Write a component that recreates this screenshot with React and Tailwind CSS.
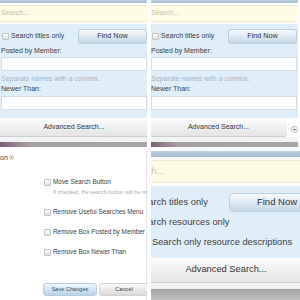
const Check = ({ big }) => (
  <span
    className={
      big
        ? 'h-[9px] w-[9px] shrink-0 rounded-[1px] border border-[#c3c3c3] bg-gradient-to-b from-white to-[#e2e2e2]'
        : 'h-[7px] w-[7px] shrink-0 rounded-[1px] border border-[#c3c3c3] bg-gradient-to-b from-white to-[#e2e2e2]'
    }
  />
);

function CircleDown({ className }) {
  return (
    <svg className={className} viewBox="0 0 9 9">
      <circle cx="4.5" cy="4.5" r="4" fill="#f3f3f3" stroke="#999" strokeWidth="0.8" />
      <path d="M2.7 3.7 L4.5 5.7 L6.3 3.7 Z" fill="#555" />
    </svg>
  );
}

function SearchForm({ toggle }) {
  return (
    <div className="flex w-[148px] flex-col text-[7px] text-[#3d3d3d]">
      <div className="h-[3px] shrink-0 bg-gradient-to-b from-[#bccfdd] to-[#a6bdd0]" />
      <div className="h-[2px] shrink-0" />
      <div className="flex h-[17px] shrink-0 items-center border-y border-[#eee9c8] bg-[#fdfbe4] pl-px text-[#c6c3a4]">
        Search...
      </div>
      <div className="h-[2px] shrink-0" />
      <div className="flex h-[94px] shrink-0 flex-col bg-[#e0eef9] px-px pt-[5px]">
        <div className="flex h-[15px] items-center justify-between">
          <label className="flex items-center gap-[2px] pl-px">
            <Check />
            Search titles only
          </label>
          <button className="h-[15px] w-[69px] rounded-[3px] border border-[#bccddb] bg-gradient-to-b from-[#f7fafc] to-[#c5d8e6] text-[7.2px] text-[#333]">
            Find Now
          </button>
        </div>
        <div className="mt-[2px] h-[10px] leading-[10px]">Posted by Member:</div>
        <div className="mt-px h-[14px] border border-[#d3dee8] bg-white" />
        <div className="mt-[3px] h-[10px] leading-[10px] text-[#a9b4bf]">Separate names with a comma.</div>
        <div className="h-[10px] leading-[10px]">Newer Than:</div>
        <div className="mt-[2px] h-[14px] border border-[#d3dee8] bg-white" />
      </div>
      {toggle ? (
        <div className="flex h-[19px] shrink-0 items-center">
          <button className="h-full w-[137px] rounded-[3px] border-b border-[#cfcfcf] bg-gradient-to-b from-[#fdfdfd] to-[#e4e4e4] text-[#333]">
            Advanced Search...
          </button>
          <CircleDown className="ml-[4px] mt-[3px] h-[7px] w-[7px]" />
        </div>
      ) : (
        <button className="h-[19px] shrink-0 border-b border-[#cfcfcf] bg-gradient-to-b from-[#fdfdfd] to-[#e4e4e4] text-[#333]">
          Advanced Search...
        </button>
      )}
      <div className="h-[5px] shrink-0 bg-[#f1f2f3]" />
      <div className="h-[6px] shrink-0 bg-[linear-gradient(90deg,#7a5f72_0px,#9a8a92_18px,#a3a3a3_30px,#a8a8a8_100%)]" />
    </div>
  );
}

function Option({ label, className }) {
  return (
    <label className={`flex h-[10px] items-center gap-[2px] whitespace-nowrap leading-[10px] ${className}`}>
      <Check />
      {label}
    </label>
  );
}

function OptionsPanel() {
  return (
    <div className="flex h-full flex-col border-r border-[#e4e4e4] bg-white text-[6.4px] text-[#3d3d3d]">
      <div className="flex h-[12px] items-center gap-[1px] text-[7px] leading-none">
        on
        <CircleDown className="h-[5px] w-[5px]" />
      </div>
      <div className="flex flex-col pl-[44px] pt-[14px]">
        <Option label="Move Search Button" />
        <div className="ml-[9px] mt-px h-[8px] whitespace-nowrap text-[5.5px] leading-[8px] text-[#adadad]">
          If checked, the search button will be moved to the right
        </div>
        <Option label="Remove Useful Searches Menu" className="mt-[11px]" />
        <Option label="Remove Box Posted by Member" className="mt-[10px]" />
        <Option label="Remove Box Newer Than" className="mt-[10px]" />
      </div>
      <div className="mt-[26px] flex gap-[2px] pl-[43px]">
        <button className="h-[13px] w-[54px] shrink-0 rounded-[3px] border border-[#b6cbdc] bg-gradient-to-b from-[#eef5fb] to-[#b9d2e5] text-[5.6px] text-[#2f4e6b]">
          Save Changes
        </button>
        <button className="h-[13px] w-[50px] shrink-0 rounded-[3px] border border-[#d2d2d2] bg-gradient-to-b from-[#fafafa] to-[#dadada] text-[5.8px] text-[#444]">
          Cancel
        </button>
      </div>
    </div>
  );
}

function ResourceSearch() {
  return (
    <div className="-ml-[26px] flex w-[202px] flex-col text-[9.3px] text-[#3d3d3d]">
      <div className="h-[6px] shrink-0 bg-gradient-to-b from-[#c0d1df] to-[#a4bcd0]" />
      <div className="h-[3px] shrink-0" />
      <div className="flex h-[23px] shrink-0 items-center border-y border-[#eee9c8] bg-[#fdfbe4] pl-[2px] text-[#c6c3a4]">
        Search...
      </div>
      <div className="h-[3px] shrink-0" />
      <div className="flex h-[72px] shrink-0 flex-col bg-[#e0eef9] pt-[7px] pr-[2px]">
        <div className="flex h-[19px] items-center justify-between">
          <label className="flex items-center gap-[2px] pl-px">
            <Check big />
            Search titles only
          </label>
          <button className="h-[19px] w-[96px] rounded-[4px] border border-[#bccddb] bg-gradient-to-b from-[#f7fafc] to-[#c5d8e6] text-[9.5px] text-[#333]">
            Find Now
          </button>
        </div>
        <label className="mt-[3px] flex h-[14px] items-center gap-[2px] pl-px leading-[14px]">
          <Check big />
          Search resources only
        </label>
        <label className="mt-[6px] flex h-[14px] items-center gap-[3px] pl-[15px] leading-[14px]">
          <Check big />
          Search only resource descriptions
        </label>
      </div>
      <button className="h-[25px] shrink-0 border-b border-[#cfcfcf] bg-gradient-to-b from-[#fdfdfd] to-[#e4e4e4] text-[#333]">
        Advanced Search...
      </button>
      <div className="h-[6px] shrink-0 bg-[#f1f2f3]" />
      <div className="h-[11px] shrink-0 bg-gradient-to-b from-[#a0a0a0] to-[#c2c2c2]" />
    </div>
  );
}

export default function App() {
  return (
    <div className="grid h-[300px] w-[300px] grid-cols-[147px_149px] grid-rows-[147px_149px] gap-[4px] overflow-hidden bg-white font-['Liberation_Sans',Arial,sans-serif]">
      <div className="overflow-hidden">
        <SearchForm />
      </div>
      <div className="overflow-hidden">
        <div className="-ml-px">
          <SearchForm toggle />
        </div>
      </div>
      <div className="overflow-hidden">
        <OptionsPanel />
      </div>
      <div className="overflow-hidden">
        <ResourceSearch />
      </div>
    </div>
  );
}
